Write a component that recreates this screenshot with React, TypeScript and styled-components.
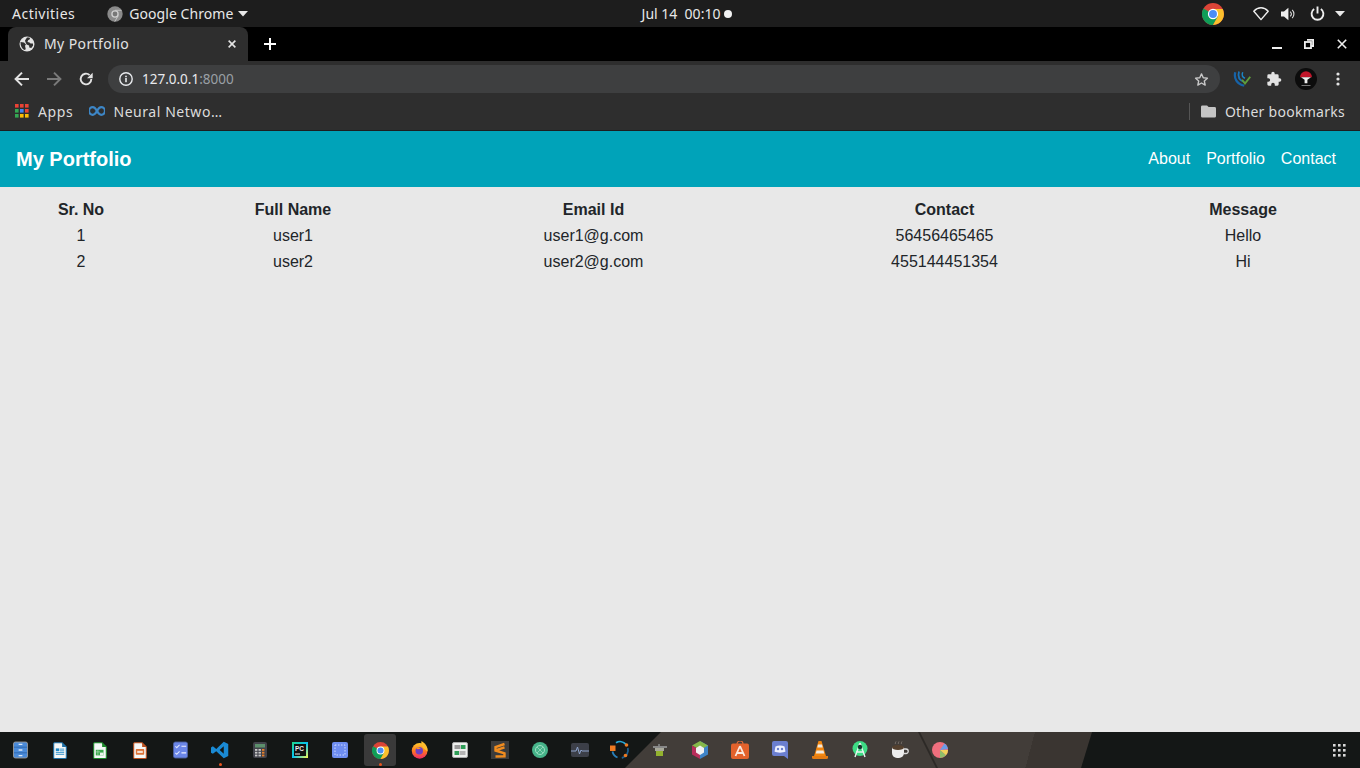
import React from "react";
import styled, { createGlobalStyle } from "styled-components";

const Global = createGlobalStyle`
  html, body { margin: 0; padding: 0; height: 100%; background: #e8e8e8; }
  #root { height: 100%; }
  * { box-sizing: border-box; }
`;

const UI_FONT = `"Noto Sans", "Open Sans", "Liberation Sans", sans-serif`;
const WEB_FONT = `"Liberation Sans", Arial, sans-serif`;

const Page = styled.div`
  display: flex;
  flex-direction: column;
  height: 768px;
  width: 1360px;
  overflow: hidden;
`;

const SystemBar = styled.div`
  display: grid;
  grid-template-columns: 1fr auto 1fr;
  align-items: center;
  height: 27px;
  background: #1d1d1d;
  color: #e8e8e8;
  font: 14px/27px ${UI_FONT};
  padding: 0 10px 0 12px;
`;
const SysLeft = styled.div`
  display: flex;
  align-items: center;
`;
const AppMenu = styled.div`
  display: flex;
  align-items: center;
  gap: 5px;
  margin-left: 32px;
`;
const AppIcon = styled.span`
  display: flex;
  margin-right: 1px;
`;
const SysLabel = styled.span<{ $ls: number }>`
  letter-spacing: ${(p) => p.$ls}px;
`;
const Clock = styled.div`
  display: flex;
  align-items: center;
  gap: 4px;
  margin-left: 12px;
  font-size: 14px;
  white-space: pre;
`;
const ClockDot = styled.span`
  width: 8px;
  height: 8px;
  border-radius: 50%;
  background: #f2f2f2;
`;
const SysRight = styled.div`
  display: flex;
  align-items: center;
  justify-content: flex-end;
  padding-right: 1px;
`;
const SysSlot = styled.span<{ $w: number; $ml?: number }>`
  display: flex;
  align-items: center;
  justify-content: center;
  width: ${(p) => p.$w}px;
  margin-left: ${(p) => p.$ml ?? 0}px;
`;

const TabStrip = styled.div`
  display: flex;
  align-items: flex-end;
  height: 34px;
  background: #000;
  padding-left: 8px;
`;
const Tab = styled.div`
  display: flex;
  align-items: center;
  width: 240px;
  height: 34px;
  padding: 0 12px 0 11px;
  border-radius: 8px 8px 0 0;
  background: #2e2e2e;
  color: #e3e3e3;
  font: 14px ${UI_FONT};
  letter-spacing: 0.4px;
  gap: 9px;
`;
const TabTitle = styled.span`
  flex: 1;
  margin-top: -2px;
`;
const NewTab = styled.span`
  display: flex;
  align-items: center;
  height: 34px;
  margin-left: 16px;
`;
const WindowButtons = styled.div`
  display: flex;
  align-items: center;
  height: 34px;
  margin-left: auto;
  padding-right: 2px;
`;
const WinSlot = styled.span`
  display: flex;
  align-items: center;
  justify-content: center;
  width: 32.5px;
`;

const Toolbar = styled.div`
  display: flex;
  align-items: center;
  height: 36px;
  background: #2e2e2e;
  padding: 0 6px 0 6px;
`;
const ToolSlot = styled.span`
  display: flex;
  align-items: center;
  justify-content: center;
  width: 32px;
  flex: none;
`;
const Omnibox = styled.div`
  display: flex;
  align-items: center;
  flex: 1;
  height: 28px;
  margin: 0 6px 0 6px;
  padding: 0 11px 0 11px;
  border-radius: 14px;
  background: #3e3f40;
  font: 13.5px ${UI_FONT};
  gap: 9px;
`;
const Host = styled.span`
  color: #e8eaed;
`;
const Port = styled.span`
  color: #9aa0a6;
`;
const UrlText = styled.span`
  flex: 1;
`;

const BookmarksBar = styled.div`
  display: flex;
  align-items: center;
  height: 34px;
  padding: 0 15px 5px 15px;
  background: #2e2e2e;
  border-bottom: 1px solid #1c1e20;
  color: #dcdcdc;
  font: 14px ${UI_FONT};
`;
const Bookmark = styled.span<{ $ml: number; $ls: number; $gap: number }>`
  display: flex;
  align-items: center;
  gap: ${(p) => p.$gap}px;
  margin-left: ${(p) => p.$ml}px;
  letter-spacing: ${(p) => p.$ls}px;
`;
const Separator = styled.span`
  width: 1px;
  height: 17px;
  background: #555;
  margin-left: auto;
`;

const NavBar = styled.nav`
  display: flex;
  align-items: center;
  justify-content: space-between;
  height: 56px;
  padding: 0 24px 0 16px;
  background: #00a3b9;
  color: #fff;
  font-family: ${WEB_FONT};
`;
const Brand = styled.div`
  font-size: 20px;
  font-weight: 700;
`;
const NavLinks = styled.div`
  display: flex;
  gap: 16px;
  font-size: 16px;
`;

const Content = styled.main`
  flex: 1;
  background: #e8e8e8;
  padding-top: 10px;
`;
const Table = styled.table`
  width: 1360px;
  table-layout: fixed;
  border-collapse: collapse;
  font: 16px/26px ${WEB_FONT};
  color: #212529;
`;
const HeadCell = styled.th`
  padding: 0;
  font-weight: 700;
  text-align: center;
`;
const Cell = styled.td`
  padding: 0;
  text-align: center;
`;

const Taskbar = styled.footer`
  position: relative;
  display: flex;
  align-items: center;
  height: 36px;
  background: #141716;
  &::before {
    content: "";
    position: absolute;
    left: 625px;
    top: 0;
    width: 467px;
    height: 36px;
    background: linear-gradient(105deg, #423d39 396px, #3a3531 396px);
    clip-path: polygon(36px 0, 467px 0, 456px 36px, 0 36px);
  }
  &::after {
    content: "";
    position: absolute;
    left: 918px;
    top: 0;
    width: 20px;
    height: 36px;
    background: #2c2926;
    clip-path: polygon(0 0, 2px 0, 20px 36px, 18px 36px);
  }
`;
const DockSlot = styled.span<{ $active?: boolean }>`
  position: relative;
  z-index: 1;
  display: flex;
  align-items: center;
  justify-content: center;
  width: 32px;
  height: 32px;
  margin: 0 4px;
  border-radius: 3px;
  background: ${(p) => (p.$active ? "#3a3a3a" : "transparent")};
`;
const RunDot = styled.span`
  position: absolute;
  left: 50%;
  bottom: 0;
  width: 3px;
  height: 3px;
  margin-left: -1.5px;
  border-radius: 50%;
  background: #e9541e;
`;
const AppGrid = styled.span`
  position: relative;
  z-index: 1;
  display: flex;
  margin-left: auto;
  margin-right: 14px;
`;

const Chrome = ({ s = 22 }: { s?: number }) => (
  <svg width={s} height={s} viewBox="0 0 24 24">
    <circle cx="12" cy="12" r="12" fill="#db4437" />
    <path d="M12 12 1.6 6A12 12 0 0 0 12 24l6-10z" fill="#0f9d58" />
    <path d="M12 6.5h10.6A12 12 0 0 1 12 24l5.2-9.4z" fill="#fbc02d" />
    <circle cx="12" cy="12" r="5.6" fill="#fff" />
    <circle cx="12" cy="12" r="4.3" fill="#4a8df6" />
  </svg>
);
const ChromeMono = () => (
  <svg width="16" height="16" viewBox="0 0 24 24">
    <circle cx="12" cy="12" r="11.5" fill="#8a8a8a" />
    <circle cx="12" cy="12" r="5.6" fill="#d0d0d0" />
    <circle cx="12" cy="12" r="3.6" fill="#777" />
    <path d="M12 6.4h10M16.8 14.8 11.6 23.4" stroke="#d0d0d0" strokeWidth="1.2" />
  </svg>
);
const Caret = () => (
  <svg width="10" height="6" viewBox="0 0 10 6">
    <path d="M0 0h10L5 5.6z" fill="#e8e8e8" />
  </svg>
);
const Wifi = () => (
  <svg width="16" height="14" viewBox="0 0 16 14">
    <path d="M.8 4.2C5-.4 11-.4 15.2 4.2L8 12.6z" fill="none" stroke="#eee" strokeWidth="1.4" strokeLinejoin="round" />
  </svg>
);
const Volume = () => (
  <svg width="16" height="14" viewBox="0 0 16 14">
    <path d="M0 4.6h3L7.4.8v12.4L3 9.4H0z" fill="#eee" />
    <path d="M9.2 4.6a3.4 3.4 0 0 1 0 4.8M11.2 2.8a6 6 0 0 1 0 8.4" fill="none" stroke="#ddd" strokeWidth="1.1" />
  </svg>
);
const Power = () => (
  <svg width="15" height="15" viewBox="0 0 16 16">
    <path d="M4.4 3.2a6.3 6.3 0 1 0 7.2 0M8 .5v7.5" fill="none" stroke="#eee" strokeWidth="2" />
  </svg>
);
const Globe = () => (
  <svg width="16" height="16" viewBox="0 0 16 16">
    <circle cx="8" cy="8" r="7.5" fill="#e3e3e3" />
    <path d="M1.5 6 5 6.5l2 2-1 1.2.8 3.6-1.5.6C3 13 1.4 10 1.5 6zM8 1.500h2.500l.6 1.600-2 1.200-.6 1.700 2 .4 1 1.200h2.400l.2 2-1.800 2.500-2-.5-.2-2-2.500-1L6.500 6.200 6 4.500z" fill="#2e2e2e" />
  </svg>
);
const CloseX = ({ s = 8, c = "#e3e3e3", w = 2 }: { s?: number; c?: string; w?: number }) => (
  <svg width={s} height={s} viewBox="0 0 10 10">
    <path d="M.8.8l8.4 8.4M9.2.8.8 9.2" stroke={c} strokeWidth={w} />
  </svg>
);
const Plus = () => (
  <svg width="12" height="12" viewBox="0 0 12 12">
    <path d="M6 0v12M0 6h12" stroke="#fff" strokeWidth="2" />
  </svg>
);
const Minimize = () => (
  <svg width="10" height="10" viewBox="0 0 10 10">
    <rect x="0" y="8" width="10" height="2" fill="#eee" />
  </svg>
);
const Restore = () => (
  <svg width="10" height="10" viewBox="0 0 10 10">
    <path d="M3 .9h6.100V7H7.200" fill="none" stroke="#eee" strokeWidth="1.800" />
    <rect x=".9" y="3" width="6.100" height="6.100" fill="none" stroke="#eee" strokeWidth="1.800" />
  </svg>
);
const Arrow = ({ c, flip }: { c: string; flip?: boolean }) => (
  <svg width="16" height="16" viewBox="0 0 16 16" style={flip ? { transform: "scaleX(-1)" } : undefined}>
    <path d="M15 8H2M8 1.6 1.6 8 8 14.4" fill="none" stroke={c} strokeWidth="2" />
  </svg>
);
const Reload = () => (
  <svg width="16" height="16" viewBox="0 0 24 24">
    <path d="M20 12a8 8 0 1 1-2.6-5.9" fill="none" stroke="#e3e3e3" strokeWidth="2.8" />
    <path d="M22 2.5v8.5h-8.5z" fill="#e3e3e3" />
  </svg>
);
const Info = () => (
  <svg width="14" height="14" viewBox="0 0 14 14">
    <circle cx="7" cy="7" r="6.2" fill="none" stroke="#e8eaed" strokeWidth="1.4" />
    <rect x="6.2" y="6" width="1.6" height="4.2" fill="#e8eaed" />
    <rect x="6.2" y="3.7" width="1.6" height="1.5" fill="#e8eaed" />
  </svg>
);
const Star = () => (
  <svg width="15" height="15" viewBox="0 0 24 24">
    <path d="M12 3l2.8 6.2 6.7.7-5 4.5 1.4 6.6L12 17.6 6.1 21l1.4-6.6-5-4.5 6.7-.7z" fill="none" stroke="#c8c8c8" strokeWidth="2.2" strokeLinejoin="round" />
  </svg>
);
const ExtWave = () => (
  <svg width="18" height="18" viewBox="0 0 24 24">
    <path d="M3 3c-2 8 2 16 12 18" fill="none" stroke="#1763a8" strokeWidth="3" />
    <path d="M8 2c-2 7 1 12 7 14" fill="none" stroke="#1a73b8" strokeWidth="2.4" />
    <path d="M13 3c-2 4 0 7 3 8" fill="none" stroke="#1a86c8" strokeWidth="2" />
    <path d="M12 13l4 5 7-9" fill="none" stroke="#5f9e3a" strokeWidth="2.6" />
  </svg>
);
const Puzzle = () => (
  <svg width="16" height="16" viewBox="0 0 24 24">
    <path d="M20.5 11H19V7a2 2 0 0 0-2-2h-4V3.5a2.5 2.5 0 0 0-5 0V5H4a2 2 0 0 0-2 2v3.8h1.5a2.7 2.7 0 0 1 0 5.4H2V20a2 2 0 0 0 2 2h3.8v-1.5a2.7 2.7 0 0 1 5.4 0V22H17a2 2 0 0 0 2-2v-4h1.5a2.5 2.5 0 0 0 0-5z" fill="#e3e3e3" />
  </svg>
);
const Avatar = () => (
  <svg width="22" height="22" viewBox="0 0 22 22">
    <circle cx="11" cy="11" r="11" fill="#0c0c0c" />
    <path d="M5 9.200a6 6 0 0 1 12 0z" fill="#c1152a" />
    <path d="M6 9.200h10l-3.600 2.600v3.400h-2.800v-3.400z" fill="#f0f0f0" />
    <rect x="6.500" y="17" width="9" height="1" fill="#777" />
  </svg>
);
const Kebab = () => (
  <svg width="4" height="14" viewBox="0 0 4 14">
    <circle cx="2" cy="2" r="1.6" fill="#e3e3e3" />
    <circle cx="2" cy="7" r="1.6" fill="#e3e3e3" />
    <circle cx="2" cy="12" r="1.6" fill="#e3e3e3" />
  </svg>
);
const AppsGrid = () => {
  const c = ["#ea4335", "#ea4335", "#ea4335", "#34a853", "#4285f4", "#ea4335", "#34a853", "#fbbc05", "#fbbc05"];
  return (
    <svg width="14" height="14" viewBox="0 0 14 14">
      {c.map((f, i) => (
        <rect key={i} x={(i % 3) * 5} y={Math.floor(i / 3) * 5} width="3.6" height="3.6" fill={f} />
      ))}
    </svg>
  );
};
const Infinity8 = () => (
  <svg width="16" height="10" viewBox="0 0 16 10">
    <path d="M8 5C6.500 2.400 5.400 1.200 3.800 1.200a3.800 3.800 0 0 0 0 7.600c1.600 0 2.700-1.200 4.200-3.800s2.600-3.800 4.200-3.800a3.800 3.800 0 0 1 0 7.600c-1.600 0-2.700-1.200-4.200-3.800z" fill="none" stroke="#3d86c6" strokeWidth="2.200" />
  </svg>
);
const Folder = () => (
  <svg width="15" height="13" viewBox="0 0 16 13">
    <path d="M1.5 0h5l1.6 1.8h6.4A1.5 1.5 0 0 1 16 3.300V11.500A1.500 1.500 0 0 1 14.500 13H1.500A1.500 1.500 0 0 1 0 11.500V1.500A1.500 1.500 0 0 1 1.500 0z" fill="#c4c4c4" />
  </svg>
);

const doc = (edge: string, inner: React.ReactNode) => (
  <svg width="14" height="17" viewBox="0 0 20 24">
    <path d="M2 1h11l6 6v15a1.500 1.500 0 0 1-1.500 1.500h-15A1.500 1.500 0 0 1 1 22V2A1.500 1.500 0 0 1 2 1z" fill="#f6f8f8" stroke={edge} strokeWidth="1.500" />
    <path d="M13 1v6h6z" fill={edge} />
    {inner}
  </svg>
);

const dock: { node: React.ReactNode; run?: boolean; active?: boolean }[] = [
  {
    node: (
      <svg width="15" height="18" viewBox="0 0 16 18">
        <rect x=".5" y=".5" width="15" height="17" rx="2" fill="#4a8ad8" stroke="#9a9a9a" />
        <path d="M1 6h14M1 12h14" stroke="#2f68ad" />
        <path d="M6 3h4M6 9h4M6 15h4" stroke="#dce9f7" strokeWidth="1.400" />
      </svg>
    ),
  },
  {
    node: doc(
      "#1c6fa6",
      <>
        <rect x="4" y="9" width="5" height="4" fill="#1e88c7" />
        <path d="M10 10h6M10 12.500h6M4 15h12M4 17.500h12" stroke="#1e88c7" strokeWidth="1.200" />
      </>
    ),
  },
  {
    node: doc(
      "#1b8a2a",
      <>
        <rect x="4" y="11" width="11" height="8" fill="#3aa84c" />
        <rect x="10" y="15" width="5" height="4" fill="#e8f4ea" />
        <path d="M4 14h6M7 11v8" stroke="#c8e6cc" strokeWidth=".8" />
      </>
    ),
  },
  {
    node: doc(
      "#bc4f1d",
      <>
        <rect x="4" y="10" width="12" height="8" rx="1" fill="#dd7338" />
        <rect x="6" y="12.500" width="8" height="3" fill="#f7e3d4" />
      </>
    ),
  },
  {
    node: (
      <svg width="15" height="18" viewBox="0 0 16 18">
        <rect x=".5" y=".5" width="15" height="17" rx="2" fill="#6b86e8" stroke="#4c5f9e" />
        <path d="M9 5h5M9 12h5" stroke="#eef" strokeWidth="1.200" />
        <path d="M2.500 5l1.500 1.500L7 3.500M2.500 12l1.500 1.500L7 10.500" fill="none" stroke="#dfe6ff" strokeWidth="1.100" />
      </svg>
    ),
  },
  {
    node: (
      <svg width="18" height="18" viewBox="0 0 24 24">
        <path d="M17 1l6 3v16l-6 3-10-9.500L2.500 17 0 15.500V8.500L2.500 7 7 10.500zM17 7l-5.500 5 5.500 5z" fill="#1a8ad4" fillRule="evenodd" />
      </svg>
    ),
    run: true,
  },
  {
    node: (
      <svg width="14" height="16" viewBox="0 0 14 16">
        <rect width="14" height="16" rx="2" fill="#41424a" />
        <rect x="2" y="2" width="10" height="3.500" fill="#5c8f6c" />
        {[0, 1, 2].map((r) =>
          [0, 1, 2].map((c) => (
            <rect key={`${r}${c}`} x={2 + c * 3.500} y={7 + r * 2.800} width="2.400" height="1.800" fill={c === 2 ? "#e6802c" : "#c9c9c9"} />
          ))
        )}
      </svg>
    ),
  },
  {
    node: (
      <svg width="16" height="16" viewBox="0 0 16 16">
        <defs>
          <linearGradient id="pc" x1="0" y1="0" x2="1" y2="1">
            <stop offset="0" stopColor="#21d789" />
            <stop offset=".5" stopColor="#07c3f2" />
            <stop offset="1" stopColor="#fcf84a" />
          </linearGradient>
        </defs>
        <rect width="16" height="16" fill="url(#pc)" />
        <rect x="2" y="2" width="12" height="12" fill="#111" />
        <text x="3" y="8.500" fontSize="6.500" fontWeight="700" fill="#eee" fontFamily={WEB_FONT}>
          PC
        </text>
        <rect x="3" y="11.500" width="5" height="1" fill="#eee" />
      </svg>
    ),
  },
  {
    node: (
      <svg width="16" height="16" viewBox="0 0 16 16">
        <rect width="16" height="16" rx="2" fill="#6e8df0" />
        <rect x="3" y="3" width="10" height="10" fill="none" stroke="#cdd8ff" strokeDasharray="1.500 1.500" />
      </svg>
    ),
  },
  { node: <Chrome s={17} />, run: true, active: true },
  {
    node: (
      <svg width="18" height="18" viewBox="0 0 24 24">
        <defs>
          <linearGradient id="ff" x1="0" y1="0" x2="0" y2="1">
            <stop offset="0" stopColor="#ffcb2e" />
            <stop offset=".5" stopColor="#ff7a1f" />
            <stop offset="1" stopColor="#f0266a" />
          </linearGradient>
        </defs>
        <circle cx="11.500" cy="13" r="10.500" fill="url(#ff)" />
        <path d="M14 0c5 3 9 8 8 14l-6-5c-1-3-3-5-2-9z" fill="#ffbd2e" />
        <circle cx="11" cy="13" r="5" fill="#6d3fc4" />
        <path d="M6 9c2-1 5-1 7 1l-4 1z" fill="#ff9a22" />
      </svg>
    ),
  },
  {
    node: (
      <svg width="16" height="16" viewBox="0 0 16 16">
        <rect x=".5" y=".5" width="15" height="15" rx="1.500" fill="#eef0ee" stroke="#aaa" />
        <rect x="2.500" y="3" width="6" height="4" fill="#9a9a9a" />
        <rect x="9" y="3" width="4.500" height="4" fill="#2f9e57" />
        <rect x="2.500" y="9" width="4.500" height="4" fill="#2f9e57" />
        <rect x="7.500" y="9" width="6" height="4" fill="#b4b4b4" />
      </svg>
    ),
  },
  {
    node: (
      <svg width="18" height="18" viewBox="0 0 18 18">
        <rect width="18" height="18" fill="#3c3c3c" />
        <path d="M13.500 3 4.500 6v3.500l9 2.800v3l-9 .2M4.500 9.300l9-3" fill="none" stroke="#f08c1f" strokeWidth="2.400" />
      </svg>
    ),
  },
  {
    node: (
      <svg width="16" height="16" viewBox="0 0 16 16">
        <circle cx="8" cy="8" r="8" fill="#46b389" />
        <circle cx="8" cy="8" r="4.500" fill="none" stroke="#a7e3c9" strokeWidth=".9" />
        <path d="M5 5l6 6M11 5l-6 6" stroke="#a7e3c9" strokeWidth=".7" />
      </svg>
    ),
  },
  {
    node: (
      <svg width="18" height="14" viewBox="0 0 18 14">
        <rect width="18" height="14" rx="2" fill="#3c3f48" />
        <path d="M0 8h5l1.500-4 2 7 1.500-4 1 1h7" fill="none" stroke="#8ea4cc" strokeWidth="1" />
      </svg>
    ),
  },
  {
    node: (
      <svg width="20" height="20" viewBox="0 0 20 20">
        <path d="M6 2.800a8 8 0 0 1 10 1.500" fill="none" stroke="#27a8d8" strokeWidth="1.800" />
        <path d="M17.800 8a8 8 0 0 1-6 10" fill="none" stroke="#1c5e8e" strokeWidth="1.800" />
        <path d="M7.500 17.500a8 8 0 0 1-5-6" fill="none" stroke="#2a7fb8" strokeWidth="1.800" />
        <rect x="0" y="5.500" width="5.500" height="5.500" fill="#ee7a22" />
        <circle cx="16.500" cy="5" r="1.800" fill="#ee7a22" />
        <circle cx="15.500" cy="15.500" r="1.800" fill="#ee7a22" />
      </svg>
    ),
  },
  {
    node: (
      <svg width="16" height="14" viewBox="0 0 16 14">
        <path d="M1 3h14v2H1z" fill="#888" />
        <rect x="3" y="5" width="9" height="3" fill="#a8a89a" />
        <rect x="4" y="8" width="7" height="5" fill="#93b32e" />
        <rect x="6" y="1" width="2" height="2" fill="#777" />
      </svg>
    ),
  },
  {
    node: (
      <svg width="16" height="18" viewBox="0 0 16 18">
        <path d="M8 0 16 4.500v9L8 18z" fill="#3e84c8" />
        <path d="M8 0 0 4.500 8 9l8-4.500z" fill="#86b84a" />
        <path d="M0 4.500v9L8 18V9z" fill="#b82e5a" />
        <path d="M8 4.500 12 7v4.500L8 14l-4-2.500V7z" fill="#f2f2f2" />
      </svg>
    ),
  },
  {
    node: (
      <svg width="18" height="18" viewBox="0 0 18 18">
        <path d="M6 3a3 3 0 0 1 6 0" fill="none" stroke="#e06a3a" strokeWidth="1.200" />
        <rect y="2.500" width="18" height="15.500" rx="2" fill="#e4622c" />
        <path d="M9 5 4.500 15M9 5l4.500 10M6 12h6" fill="none" stroke="#fbe9df" strokeWidth="1.800" />
      </svg>
    ),
  },
  {
    node: (
      <svg width="16" height="18" viewBox="0 0 16 18">
        <path d="M2 0h12a2 2 0 0 1 2 2v16l-4-3H2a2 2 0 0 1-2-2V2a2 2 0 0 1 2-2z" fill="#6b7fd0" />
        <path d="M3.500 5.500C6 4 10 4 12.500 5.500L13.500 10.500C11 12 5 12 2.500 10.500z" fill="#eef1ff" />
        <circle cx="6" cy="8" r="1.200" fill="#6b7fd0" />
        <circle cx="10" cy="8" r="1.200" fill="#6b7fd0" />
      </svg>
    ),
  },
  {
    node: (
      <svg width="16" height="18" viewBox="0 0 16 18">
        <path d="M0 15h16v1.500a1.500 1.500 0 0 1-1.500 1.500h-13A1.500 1.500 0 0 1 0 16.500z" fill="#e37b12" />
        <path d="M6.500 0h3L14 15H2z" fill="#f2860f" />
        <path d="M6 3.500h4l.7 3H5.300zM4.500 9.500h7l.7 3H3.800z" fill="#efe9e0" />
      </svg>
    ),
  },
  {
    node: (
      <svg width="16" height="18" viewBox="0 0 16 18">
        <circle cx="8" cy="7.500" r="7.500" fill="#3ddc84" />
        <path d="M8 2 3 16M8 2l5 14M4 11h8" fill="none" stroke="#e8f2ee" strokeWidth="1.400" />
        <circle cx="8" cy="6" r="2.200" fill="#12332a" />
      </svg>
    ),
  },
  {
    node: (
      <svg width="18" height="18" viewBox="0 0 18 18">
        <path d="M4 3c1-1 0-1.500 1-2.500M7 3c1-1 0-1.500 1-2.500M10 3c1-1 0-1.500 1-2.500" fill="none" stroke="#8a8078" strokeWidth=".8" />
        <path d="M1 6h12v6a5 5 0 0 1-5 5H6a5 5 0 0 1-5-5z" fill="#ededed" />
        <ellipse cx="7" cy="6.500" rx="6" ry="2.400" fill="#54402e" />
        <path d="M13 8h2a2 2 0 0 1 0 4.500h-2" fill="none" stroke="#ddd" strokeWidth="1.300" />
      </svg>
    ),
  },
  {
    node: (
      <svg width="16" height="16" viewBox="0 0 16 16">
        <circle cx="8" cy="8" r="8" fill="#ef6f7e" />
        <path d="M8 8 12.500 1.400A8 8 0 0 1 16 7z" fill="#6a9be8" />
        <path d="M8 8h8a8 8 0 0 1-2 5.300z" fill="#f1d35a" />
        <path d="M8 8l6 5.300A8 8 0 0 1 8 16z" fill="#8fbf6a" />
      </svg>
    ),
  },
];

const columns = [162, 262, 339, 363, 234];
const headers = ["Sr. No", "Full Name", "Email Id", "Contact", "Message"];
const rows = [
  ["1", "user1", "user1@g.com", "56456465465", "Hello"],
  ["2", "user2", "user2@g.com", "455144451354", "Hi"],
];

export default function App() {
  return (
    <Page>
      <Global />
      <SystemBar>
        <SysLeft>
          <SysLabel $ls={0.5}>Activities</SysLabel>
          <AppMenu>
            <AppIcon><ChromeMono /></AppIcon>
            <SysLabel $ls={0.05}>Google Chrome</SysLabel>
            <Caret />
          </AppMenu>
        </SysLeft>
        <Clock>
          Jul 14  00:10
          <ClockDot />
        </Clock>
        <SysRight>
          <SysSlot $w={40}><Chrome /></SysSlot>
          <SysSlot $w={28} $ml={14}><Wifi /></SysSlot>
          <SysSlot $w={28}><Volume /></SysSlot>
          <SysSlot $w={28}><Power /></SysSlot>
          <SysSlot $w={18}><Caret /></SysSlot>
        </SysRight>
      </SystemBar>

      <TabStrip>
        <Tab>
          <Globe />
          <TabTitle>My Portfolio</TabTitle>
          <CloseX />
        </Tab>
        <NewTab><Plus /></NewTab>
        <WindowButtons>
          <WinSlot><Minimize /></WinSlot>
          <WinSlot><Restore /></WinSlot>
          <WinSlot><CloseX s={10} c="#eee" w={1.6} /></WinSlot>
        </WindowButtons>
      </TabStrip>

      <Toolbar>
        <ToolSlot><Arrow c="#e3e3e3" /></ToolSlot>
        <ToolSlot><Arrow c="#7a7a7a" flip /></ToolSlot>
        <ToolSlot><Reload /></ToolSlot>
        <Omnibox>
          <Info />
          <UrlText>
            <Host>127.0.0.1</Host>
            <Port>:8000</Port>
          </UrlText>
          <Star />
        </Omnibox>
        <ToolSlot><ExtWave /></ToolSlot>
        <ToolSlot><Puzzle /></ToolSlot>
        <ToolSlot><Avatar /></ToolSlot>
        <ToolSlot><Kebab /></ToolSlot>
      </Toolbar>

      <BookmarksBar>
        <Bookmark $ml={0} $ls={0.65} $gap={9}>
          <AppsGrid />
          Apps
        </Bookmark>
        <Bookmark $ml={16} $ls={0.55} $gap={8}>
          <Infinity8 />
          Neural Netwo…
        </Bookmark>
        <Separator />
        <Bookmark $ml={11} $ls={0.28} $gap={9}>
          <Folder />
          Other bookmarks
        </Bookmark>
      </BookmarksBar>

      <NavBar>
        <Brand>My Portfolio</Brand>
        <NavLinks>
          <span>About</span>
          <span>Portfolio</span>
          <span>Contact</span>
        </NavLinks>
      </NavBar>

      <Content>
        <Table>
          <colgroup>
            {columns.map((w) => (
              <col key={w} width={w} />
            ))}
          </colgroup>
          <thead>
            <tr>
              {headers.map((h) => (
                <HeadCell key={h}>{h}</HeadCell>
              ))}
            </tr>
          </thead>
          <tbody>
            {rows.map((r) => (
              <tr key={r[0]}>
                {r.map((c) => (
                  <Cell key={c}>{c}</Cell>
                ))}
              </tr>
            ))}
          </tbody>
        </Table>
      </Content>

      <Taskbar>
        {dock.map((d, i) => (
          <DockSlot key={i} $active={d.active}>
            {d.node}
            {d.run && <RunDot />}
          </DockSlot>
        ))}
        <AppGrid>
          <svg width="13" height="13" viewBox="0 0 13 13">
            {[0, 1, 2].flatMap((r) =>
              [0, 1, 2].map((c) => <rect key={`${r}${c}`} x={c * 5} y={r * 5} width="2.600" height="2.600" fill="#d8d8d8" />)
            )}
          </svg>
        </AppGrid>
      </Taskbar>
    </Page>
  );
}
